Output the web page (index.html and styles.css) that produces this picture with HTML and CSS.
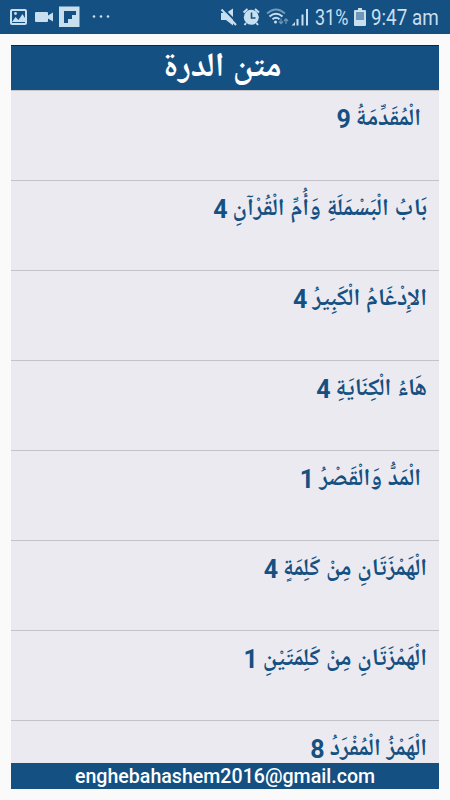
FILE: index.html
```html
<!DOCTYPE html>
<html lang="ar">
<head>
    <meta charset="UTF-8">
    <meta name="viewport" content="width=device-width, initial-scale=1.0">
    <title>متن الدرة</title>
    <link rel="stylesheet" href="styles.css">
</head>
<body>

    <div class="status-bar">
        <svg class="notifications" width="120" height="34" viewBox="0 0 120 34">
            <path fill-rule="evenodd" d="M12 9h13q2 0 2 2v12q0 2-2 2H12q-2 0-2-2V11q0-2 2-2zM12 11v12h13V11z"/>
            <path d="M12 22l3.500-5 3 3 4-6 3 5v3z"/>
            <circle cx="15.500" cy="13.500" r="1.400"/>
            <path d="M36 12h11q1 0 1 1v2.500l5-3v9l-5-3V21q0 1-1 1H36q-1 0-1-1v-8q0-1 1-1z"/>
            <path fill-rule="evenodd" d="M59 6.500h20.500V27H59zM64 11v12h4v-4h4v-4h4v-4z"/>
            <circle cx="94" cy="16.500" r="1.300"/>
            <circle cx="101" cy="16.500" r="1.300"/>
            <circle cx="108" cy="16.500" r="1.300"/>
        </svg>
        <svg class="system" width="93" height="34" viewBox="220 0 93 34">
            <path d="M221 13h5l7-4.500v17l-7-5.500h-5z"/>
            <path class="cut" d="M222 7.500l15.500 15.500"/>
            <path class="line" d="M221.500 9.500l14.500 15.500"/>
            <circle cx="251.300" cy="17.300" r="7.500"/>
            <path class="line" d="M243.500 12.500l4-3.500M259 12.500l-4-3.500M246 23l-1.500 2M256.500 23l1.500 2"/>
            <path class="cut thin" d="M251.500 12.500v5.500h4"/>
            <path class="line dim" d="M267 13.500q9-8 18 0"/>
            <path class="line" d="M269.500 16.500q6.500-5.500 13 0M272.500 19.300q3.500-3 7 0"/>
            <circle cx="275.500" cy="22" r="1.500"/>
            <path class="arrows" d="M281 18.500v5m-2-2l2 2.200 2-2.200M286 24v-5m-2 2l2-2.200 2 2.200"/>
            <path d="M291.500 25.500h3.500V22zM296.500 19h2v6.500h-2zM301.500 14.500h2v11h-2zM306 9h2v16.500h-2z"/>
        </svg>
        <span class="percent">31%</span>
        <svg class="battery" width="12" height="18" viewBox="0 0 12 18">
            <path d="M4 0h4v2h3q1 0 1 1v14q0 1-1 1H1q-1 0-1-1V3q0-1 1-1h3z"/>
            <path class="empty" d="M2 4h8v8H2z"/>
        </svg>
        <span class="clock">9:47 am</span>
    </div>

    <div class="screen">
        <h1 class="title">متن الدرة</h1>
        <ul class="chapters" dir="rtl">
            <li class="indent"><span>الْمُقَدِّمَةُ</span><span class="count">9</span></li>
            <li><span>بَابُ الْبَسْمَلَةِ وَأُمِّ الْقُرْآنِ</span><span class="count">4</span></li>
            <li><span>الإِدْغَامُ الْكَبِيرُ</span><span class="count">4</span></li>
            <li><span>هَاءُ الْكِنَايَةِ</span><span class="count">4</span></li>
            <li class="indent"><span>الْمَدُّ وَالْقَصْرُ</span><span class="count">1</span></li>
            <li><span>الْهَمْزَتَانِ مِنْ كَلِمَةٍ</span><span class="count">4</span></li>
            <li><span>الْهَمْزَتَانِ مِنْ كَلِمَتَيْنِ</span><span class="count">1</span></li>
            <li><span>الْهَمْزُ الْمُفْرَدُ</span><span class="count">8</span></li>
        </ul>
        <div class="contact">enghebahashem2016@gmail.com</div>
    </div>

</body>
</html>
```
FILE: styles.css
```css
body {
    margin: 0;
    height: 800px;
    overflow: hidden;
    background: #fafafa;
    font-family: Roboto, "Noto Naskh Arabic", "Noto Sans Arabic", "DejaVu Sans", sans-serif;
}

.status-bar {
    display: flex;
    align-items: center;
    height: 34px;
    background: #145081;
    color: #c8dff0;
    fill: #c8dff0;
    font-size: 20px;
    white-space: nowrap;
}

.notifications {
    margin-right: 100px;
}

.system {
    flex: none;
}

.line {
    fill: none;
    stroke: #c8dff0;
    stroke-width: 2;
}

.dim {
    stroke: #6f98ba;
}

.cut {
    fill: none;
    stroke: #145081;
    stroke-width: 2;
}

.thin {
    stroke-width: 1.6;
}

.arrows {
    fill: none;
    stroke: #6f98ba;
    stroke-width: 1.2;
}

.percent {
    width: 36px;
    margin-left: 2px;
    transform: scale(0.9, 1.1);
    transform-origin: left;
}

.battery {
    margin: 0 5px 0 3px;
}

.empty {
    fill: #6f98ba;
}

.clock {
    transform: scale(0.94, 1.1);
    transform-origin: left;
}

.screen {
    display: flex;
    flex-direction: column;
    height: 744px;
    margin: 11px 11px 0;
    background: #ebeaf1;
}

.title {
    flex: none;
    box-sizing: border-box;
    height: 46px;
    margin: 0;
    padding-right: 5px;
    border-top: 1px solid #0a2747;
    border-bottom: 1px solid #c9c5c8;
    background: #145081;
    color: #fff;
    font-size: 34px;
    font-weight: 700;
    line-height: 37px;
    text-align: center;
}

.chapters {
    flex: 1;
    min-height: 0;
    overflow: hidden;
    margin: 0;
    padding: 0;
    list-style: none;
    color: #145081;
}

.chapters li {
    display: flex;
    box-sizing: border-box;
    height: 90px;
    padding: 9px 12px 0;
    border-bottom: 1px solid #c4c3ca;
    font-size: 23.7px;
    font-weight: 700;
    line-height: 34px;
    white-space: nowrap;
}

.chapters .indent {
    padding-right: 18px;
}

.count {
    margin-right: 5px;
    font-size: 25px;
    line-height: 40px;
}

.contact {
    flex: none;
    height: 26px;
    background: #145081;
    color: #fff;
    font-size: 19.6px;
    font-weight: 500;
    line-height: 28px;
    text-align: center;
}
```
